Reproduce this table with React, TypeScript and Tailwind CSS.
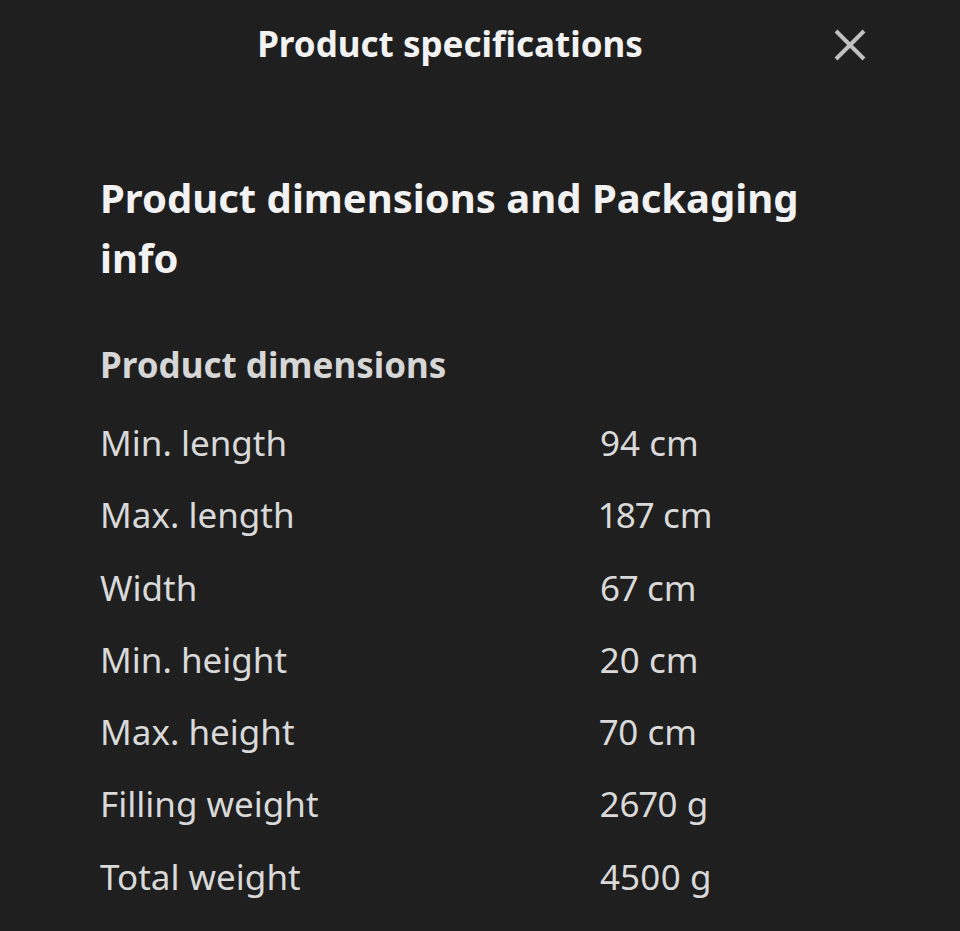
const rows: [string, string][] = [
  ["Min. length", "94 cm"],
  ["Max. length", "187 cm"],
  ["Width", "67 cm"],
  ["Min. height", "20 cm"],
  ["Max. height", "70 cm"],
  ["Filling weight", "2670 g"],
  ["Total weight", "4500 g"],
];

function CloseIcon() {
  return (
    <svg width="32" height="32" viewBox="0 0 32 32" className="text-[#c0c0c0]">
      <path d="M2 2L30 30M30 2L2 30" stroke="currentColor" strokeWidth="4" strokeLinecap="butt" />
    </svg>
  );
}

export default function App() {
  return (
    <div className="min-h-[931px] w-[960px] bg-[#1f1f1f] font-['Noto_Sans',sans-serif] text-[#d9d9d9] overflow-hidden">
      {/* header */}
      <div className="grid w-[900px] grid-cols-[1fr_auto_1fr] items-center pt-[20px]">
        <div />
        <h1 className="text-[35px] font-bold leading-[48px] text-[#f2f2f2]">Product specifications</h1>
        <div className="flex justify-end pr-[34px] pt-[1px]">
          <CloseIcon />
        </div>
      </div>

      <div className="pl-[100px] pr-[120px] pt-[100px]">
        <h2 className="text-[40px] font-bold leading-[60px] text-[#f2f2f2]">
          Product dimensions and Packaging info
        </h2>

        <h3 className="mt-[53px] text-[35px] font-bold leading-[48px] text-[#d6d6d6]">Product dimensions</h3>

        <div className="mt-[18px] flex flex-col">
          {rows.map(([label, value]) => (
            <div
              key={label}
              className="grid grid-cols-[500px_1fr] text-[35px] leading-[72.3px] [font-variant-numeric:proportional-nums]"
            >
              <span>{label}</span>
              <span>{value}</span>
            </div>
          ))}
        </div>
      </div>
    </div>
  );
}
